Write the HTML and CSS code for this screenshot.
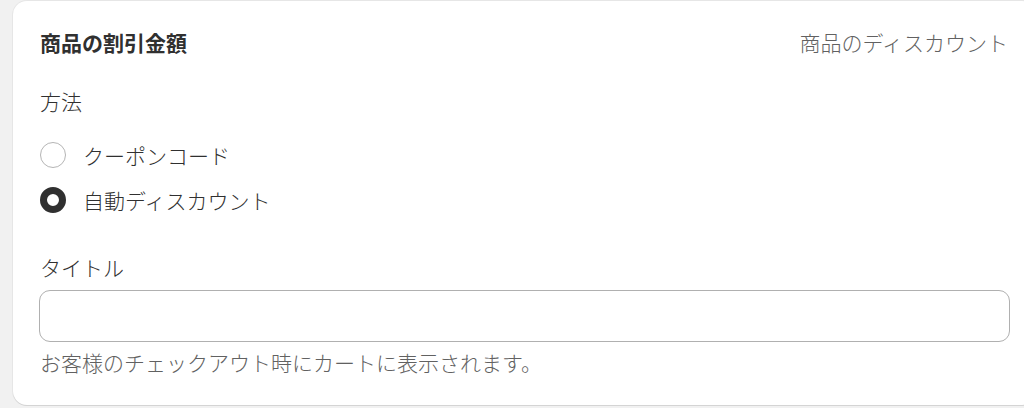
FILE: index.html
```html
<!DOCTYPE html>
<html lang="ja">
<head>
<meta charset="utf-8">
<title>商品の割引金額</title>
<link rel="stylesheet" href="styles.css">
</head>
<body>
<section class="card">
  <header class="card-header">
    <h2 class="card-title">商品の割引金額</h2>
    <span class="card-meta">商品のディスカウント</span>
  </header>
  <div class="group-label">方法</div>
  <div class="radios">
    <label class="radio-row">
      <input type="radio" name="method" class="radio">
      <span>クーポンコード</span>
    </label>
    <label class="radio-row">
      <input type="radio" name="method" class="radio" checked>
      <span>自動ディスカウント</span>
    </label>
  </div>
  <label class="field-label" for="title">タイトル</label>
  <input id="title" class="text-input" type="text">
  <p class="help">お客様のチェックアウト時にカートに表示されます。</p>
</section>
</body>
</html>
```

FILE: styles.css
```css
html, body {
  margin: 0;
  padding: 0;
  overflow: hidden;
  background: #f1f1f1;
}
body {
  font-family: "Noto Sans CJK JP", "Noto Sans", sans-serif;
  font-weight: 300;
  color: #303030;
  font-size: 21px;
  width: 1024px;
  height: 408px;
}
.card {
  box-sizing: border-box;
  margin: 1px 0 0 13px;
  width: 1023px;
  background: #ffffff;
  border-radius: 14px;
  padding: 26px 27px 28px 27px;
  box-shadow: 0 1px 0 0 #d4d4d4, 0 0 0 1px #e6e6e6;
  display: flex;
  flex-direction: column;
}
.card-header {
  display: flex;
  justify-content: space-between;
  align-items: center;
  height: 30px;
}
.card-title {
  margin: 0;
  font-size: 21px;
  font-weight: 700;
  line-height: 30px;
  color: #303030;
}
.card-meta {
  color: #616161;
  line-height: 30px;
  margin-right: 1px;
}
.group-label {
  margin-top: 29px;
  line-height: 30px;
}
.radios {
  margin-top: 24px;
  display: flex;
  flex-direction: column;
  gap: 15px;
}
.radio-row {
  display: flex;
  align-items: center;
  gap: 17px;
  height: 30px;
  line-height: 30px;
}
.radio {
  appearance: none;
  -webkit-appearance: none;
  margin: 0;
  width: 26px;
  height: 26px;
  border-radius: 50%;
  border: 1.5px solid #b5b5b5;
  background: #fff;
  box-sizing: border-box;
}
.radio:checked {
  border: 7.5px solid #303030;
}
.field-label {
  margin-top: 37px;
  line-height: 30px;
}
.text-input {
  box-sizing: border-box;
  margin: 8px 0 0 -1px;
  width: calc(100% + 2px);
  height: 52px;
  border: 1px solid #b0b0b0;
  border-radius: 11px;
  background: #fff;
  font: inherit;
  padding: 0 14px;
  outline: none;
}
.help {
  margin: 5px 0 0 0;
  line-height: 30px;
  color: #616161;
}
```
